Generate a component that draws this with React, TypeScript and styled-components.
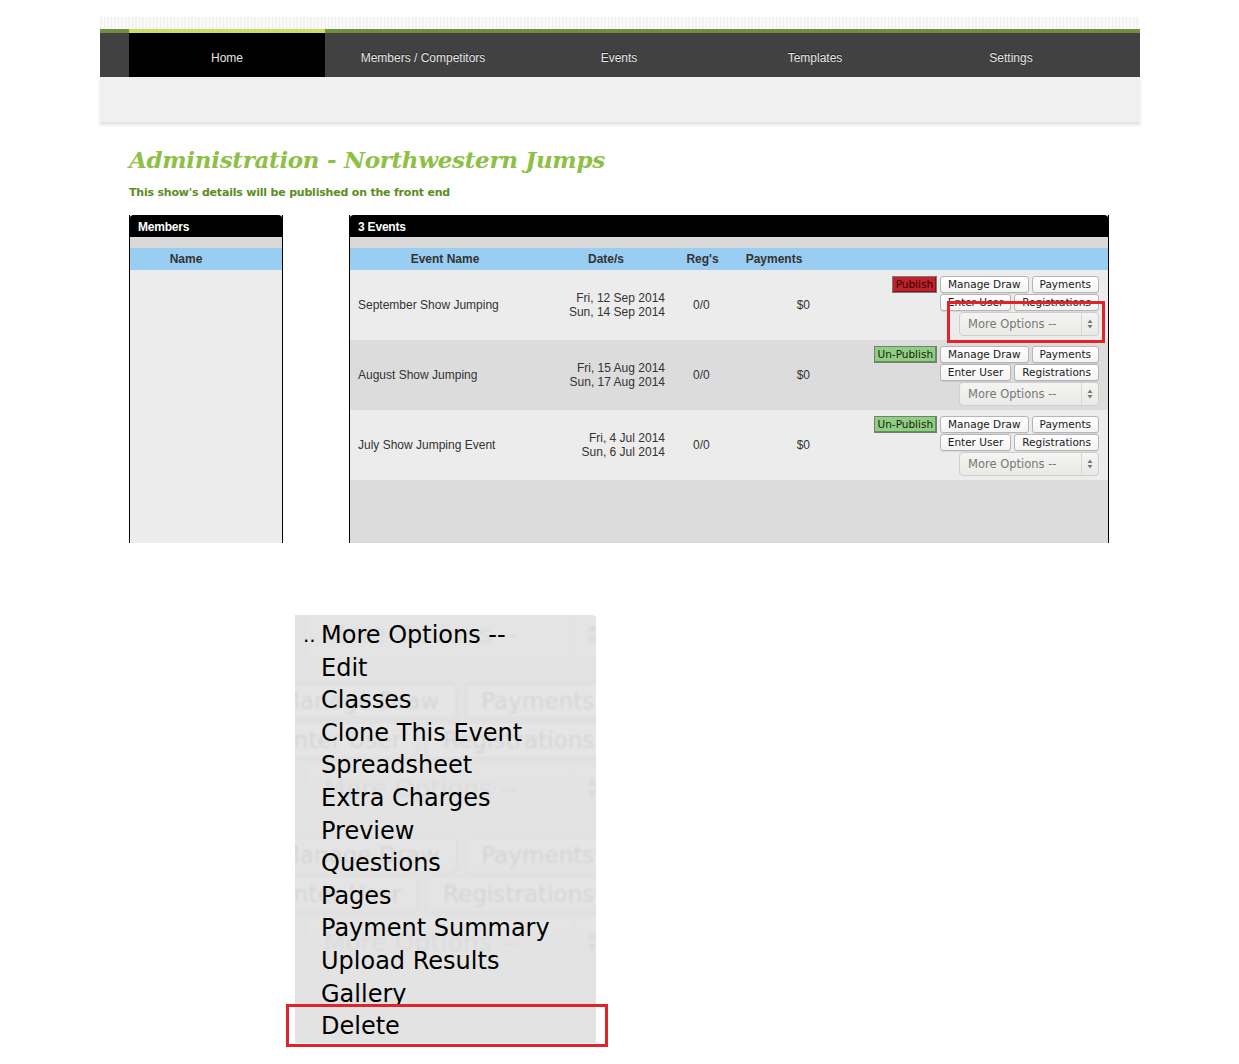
import React from "react";
import styled, { createGlobalStyle } from "styled-components";

const Global = createGlobalStyle`
  html, body { margin: 0; padding: 0; background: #fff; }
  body { font-family: "Liberation Sans", Arial, sans-serif; }
  * { box-sizing: border-box; }
`;

const Page = styled.div`
  width: 1239px;
  padding-top: 17px;
  padding-bottom: 20px;
`;

const PatternStrip = styled.div`
  margin: 0 99px 0 100px;
  height: 12px;
  background-image: repeating-linear-gradient(90deg, #f3f3f3 0 2px, #fbfbfb 2px 4px, #eeeeee 4px 5px, #fafafa 5px 7px);
`;

const Header = styled.div`
  margin: 0 99px 0 100px;
  border-top: 4px solid #6e8f3b;
  background: #414141;
  height: 48px;
  display: flex;
  padding-left: 29px;
`;

const Tab = styled.div<{ $active?: boolean }>`
  width: 196px;
  height: ${(p) => (p.$active ? "48px" : "44px")};
  margin-top: ${(p) => (p.$active ? "-4px" : "0")};
  border-top: ${(p) => (p.$active ? "4px solid #cddc5e" : "none")};
  background: ${(p) => (p.$active ? "#000" : "transparent")};
  color: #e6e6e6;
  font-size: 12px;
  display: flex;
  align-items: center;
  justify-content: center;
  padding-top: 6px;
  text-shadow: 0 -1px 0 rgba(0, 0, 0, 0.6);
`;

const SubBar = styled.div`
  margin: 0 99px 0 100px;
  height: 45px;
  background: #f0f0f0;
  box-shadow: 0 3px 3px rgba(0, 0, 0, 0.12);
`;

const Content = styled.div`
  padding: 23px 0 0 129px;
`;

const Title = styled.h1`
  margin: 0;
  font-family: "DejaVu Serif", Georgia, serif;
  font-style: italic;
  font-weight: bold;
  font-size: 23px;
  line-height: 30px;
  color: #8dc044;
  letter-spacing: -0.3px;
`;

const Subtitle = styled.p`
  margin: 11px 0 0 0;
  font-family: "DejaVu Sans", Verdana, sans-serif;
  font-weight: bold;
  font-size: 11px;
  color: #5b8d21;
  letter-spacing: -0.2px;
`;

const Panels = styled.div`
  display: flex;
  gap: 66px;
  margin-top: 16px;
`;

const Panel = styled.div<{ $w: number }>`
  width: ${(p) => p.$w}px;
  height: 328px;
  display: flex;
  flex-direction: column;
  border-left: 1px solid #000;
  border-right: 1px solid #000;
  background: #ececec;
`;

const PanelHead = styled.div`
  height: 22px;
  background: #000;
  border-radius: 5px 5px 0 0;
  margin: 0 -1px;
  color: #fff;
  font-weight: bold;
  font-size: 12px;
  letter-spacing: -0.2px;
  padding: 5px 0 0 9px;
`;

const GreyStrip = styled.div`
  height: 11px;
  background: #d9d9d9;
`;

const BlueRow = styled.div`
  height: 22px;
  background: #99cdf2;
  display: grid;
  grid-template-columns: 190px 132px 61px 82px 1fr;
  align-items: center;
  font-weight: bold;
  font-size: 12px;
  color: #333;
`;

const MemberHead = styled(BlueRow)`
  grid-template-columns: 1fr;
  justify-items: center;
  padding-right: 40px;
`;

const HeadCell = styled.div`
  text-align: center;
`;

const EventRow = styled.div<{ $alt?: boolean }>`
  height: 70px;
  background: ${(p) => (p.$alt ? "#dcdcdc" : "#ececec")};
  display: grid;
  grid-template-columns: 190px 132px 61px 82px 1fr;
  align-items: center;
  font-size: 12px;
  color: #333;
`;

const NameCell = styled.div`
  padding-left: 8px;
`;

const DateCell = styled.div`
  text-align: right;
  padding-right: 7px;
  line-height: 14px;
`;

const RegCell = styled.div`
  padding-left: 21px;
`;

const PayCell = styled.div`
  text-align: right;
  padding-right: 5px;
`;

const Filler = styled.div`
  flex: 1;
  background: #dcdcdc;
`;

const Actions = styled.div`
  position: relative;
  align-self: start;
  padding: 6px 9px 0 0;
  display: flex;
  flex-direction: column;
  align-items: flex-end;
  gap: 1px;
  font-family: "DejaVu Sans", "Lucida Grande", sans-serif;
`;

const BtnLine = styled.div`
  display: flex;
  gap: 3px;
`;

const Btn = styled.div<{ $tone?: "red" | "green" }>`
  height: 17px;
  font-size: 10.5px;
  line-height: 15px;
  color: ${(p) => (p.$tone === "red" ? "#2a0000" : "#1a1a1a")};
  background: ${(p) =>
    p.$tone === "red" ? "#c0202c" : p.$tone === "green" ? "#8fcf80" : "linear-gradient(#ffffff, #f3f3f3)"};
  border: 1px solid ${(p) => (p.$tone ? "#7a7a7a" : "#b5b5b5")};
  border-radius: ${(p) => (p.$tone ? "0" : "3px")};
  box-shadow: ${(p) => (p.$tone ? "inset -1px -1px 0 rgba(0,0,0,0.3)" : "0 1px 0 rgba(0,0,0,0.08)")};
  padding: ${(p) => (p.$tone ? "0 3px" : "0 7px")};
  white-space: nowrap;
`;

const Select = styled.div`
  width: 140px;
  height: 24px;
  border: 1px solid #cfcfcf;
  border-radius: 4px;
  background: linear-gradient(#f4f4f2, #e9e9e6);
  display: flex;
  align-items: stretch;
  font-size: 11.5px;
  color: #777;
`;

const SelectLabel = styled.div`
  flex: 1;
  padding: 4px 0 0 8px;
`;

const SelectArrow = styled.div`
  width: 17px;
  border-left: 1px solid #d8d8d8;
  display: flex;
  align-items: center;
  justify-content: center;
`;

const Highlight = styled.div`
  position: absolute;
  right: 3px;
  top: 31px;
  width: 158px;
  height: 42px;
  border: 3px solid #e0242a;
  pointer-events: none;
`;

const Arrows = () => (
  <svg width="6" height="10" viewBox="0 0 6 10">
    <path d="M3 0.5 L5.5 4 L0.5 4 Z" fill="#777" />
    <path d="M3 9.5 L5.5 6 L0.5 6 Z" fill="#777" />
  </svg>
);

type Ev = { name: string; d1: string; d2: string; published: boolean };
const events: Ev[] = [
  { name: "September Show Jumping", d1: "Fri, 12 Sep 2014", d2: "Sun, 14 Sep 2014", published: false },
  { name: "August Show Jumping", d1: "Fri, 15 Aug 2014", d2: "Sun, 17 Aug 2014", published: true },
  { name: "July Show Jumping Event", d1: "Fri, 4 Jul 2014", d2: "Sun, 6 Jul 2014", published: true },
];

const ActionStack: React.FC<{ published: boolean; highlight?: boolean }> = ({ published, highlight }) => (
  <Actions>
    <BtnLine>
      <Btn $tone={published ? "green" : "red"}>{published ? "Un-Publish" : "Publish"}</Btn>
      <Btn>Manage Draw</Btn>
      <Btn>Payments</Btn>
    </BtnLine>
    <BtnLine>
      <Btn>Enter User</Btn>
      <Btn>Registrations</Btn>
    </BtnLine>
    <Select>
      <SelectLabel>More Options --</SelectLabel>
      <SelectArrow>
        <Arrows />
      </SelectArrow>
    </Select>
    {highlight && <Highlight />}
  </Actions>
);

const MenuWrap = styled.div`
  margin: 72px 0 0 286px;
  width: 322px;
  height: 432px;
  position: relative;
`;

const Menu = styled.div`
  position: relative;
  margin-left: 9px;
  width: 301px;
  height: 428px;
  background: #e3e3e3;
  overflow: hidden;
  border-radius: 0 4px 0 0;
`;

const Ghost = styled.div`
  position: absolute;
  left: -310px;
  top: -100px;
  width: 294px;
  transform: scale(2.2);
  transform-origin: 0 0;
  opacity: 0.07;
  filter: blur(0.6px);
`;

const GhostRow = styled.div`
  height: 70px;
  display: flex;
  justify-content: flex-end;
`;

const MenuList = styled.ul`
  position: relative;
  list-style: none;
  margin: 0;
  padding: 4px 0 0 26px;
  font-family: "DejaVu Sans", "Lucida Grande", sans-serif;
  font-size: 24px;
  line-height: 32.6px;
  color: #000;
`;

const MenuItem = styled.li<{ $checked?: boolean }>`
  position: relative;
  &::before {
    content: ${(p) => (p.$checked ? '".."' : '""')};
    position: absolute;
    left: -18px;
    font-size: 20px;
  }
`;

const DeleteBox = styled.div`
  position: absolute;
  left: 0;
  top: 389px;
  width: 322px;
  height: 43px;
  border: 3px solid #e0242a;
  pointer-events: none;
`;

const items = [
  "More Options --",
  "Edit",
  "Classes",
  "Clone This Event",
  "Spreadsheet",
  "Extra Charges",
  "Preview",
  "Questions",
  "Pages",
  "Payment Summary",
  "Upload Results",
  "Gallery",
  "Delete",
];

export default function App() {
  return (
    <Page>
      <Global />
      <PatternStrip />
      <Header>
        <Tab $active>Home</Tab>
        <Tab>Members / Competitors</Tab>
        <Tab>Events</Tab>
        <Tab>Templates</Tab>
        <Tab>Settings</Tab>
      </Header>
      <SubBar />
      <Content>
        <Title>Administration - Northwestern Jumps</Title>
        <Subtitle>This show's details will be published on the front end</Subtitle>
        <Panels>
          <Panel $w={154}>
            <PanelHead>Members</PanelHead>
            <GreyStrip />
            <MemberHead>
              <HeadCell>Name</HeadCell>
            </MemberHead>
          </Panel>
          <Panel $w={760}>
            <PanelHead>3 Events</PanelHead>
            <GreyStrip />
            <BlueRow>
              <HeadCell>Event Name</HeadCell>
              <HeadCell>Date/s</HeadCell>
              <HeadCell>Reg's</HeadCell>
              <HeadCell>Payments</HeadCell>
              <div />
            </BlueRow>
            {events.map((e, i) => (
              <EventRow key={e.name} $alt={i % 2 === 1}>
                <NameCell>{e.name}</NameCell>
                <DateCell>
                  {e.d1}
                  <br />
                  {e.d2}
                </DateCell>
                <RegCell>0/0</RegCell>
                <PayCell>$0</PayCell>
                <ActionStack published={e.published} highlight={i === 0} />
              </EventRow>
            ))}
            <Filler />
          </Panel>
        </Panels>
      </Content>
      <MenuWrap>
        <Menu>
          <Ghost>
            {events.map((e) => (
              <GhostRow key={e.name}>
                <ActionStack published={e.published} />
              </GhostRow>
            ))}
          </Ghost>
          <MenuList>
            {items.map((t, i) => (
              <MenuItem key={t} $checked={i === 0}>
                {t}
              </MenuItem>
            ))}
          </MenuList>
        </Menu>
        <DeleteBox />
      </MenuWrap>
    </Page>
  );
}
